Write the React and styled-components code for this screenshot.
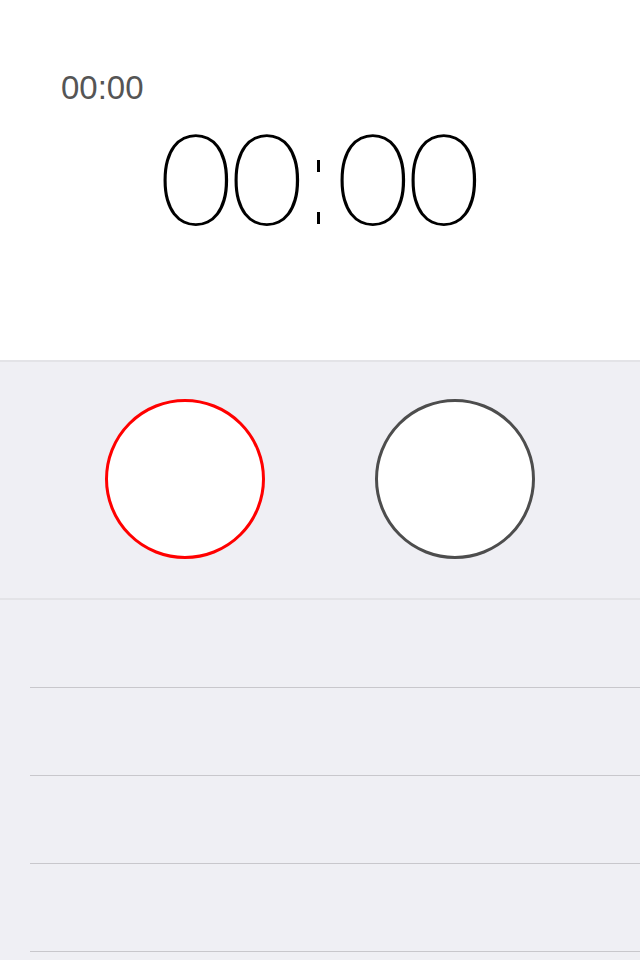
import styled, { createGlobalStyle } from 'styled-components'

const Global = createGlobalStyle`
  body {
    margin: 0;
    background: #efeff4;
    font-family: 'Liberation Sans', Arial, sans-serif;
    overflow: hidden;
  }
`

const Screen = styled.div`
  width: 640px;
  height: 960px;
  overflow: hidden;
  display: flex;
  flex-direction: column;
  background: #efeff4;
`

const Display = styled.section`
  flex: none;
  height: 362px;
  box-sizing: border-box;
  padding-top: 71px;
  background: #fff;
  border-bottom: 2px solid #e3e3e7;
`

const LapTime = styled.div`
  padding-left: 61px;
  font-size: 33px;
  line-height: 1;
  color: #555;
`

const MainTime = styled.div`
  display: flex;
  justify-content: center;
  padding-right: 3px;
  margin-top: 9px;
  font-family: Lato, 'DejaVu Sans', sans-serif;
  font-weight: 100;
  font-size: 127px;
  line-height: 1;
  color: #000;
  -webkit-text-stroke: 1.6px #000;
`

const Digit = styled.span`
  width: 71px;
  text-align: center;
`

const Colon = styled.span`
  position: relative;
  width: 35px;
  text-align: center;
  color: transparent;
  -webkit-text-stroke: 0;

  &::before,
  &::after {
    content: '';
    position: absolute;
    left: 16px;
    width: 3px;
    height: 12px;
    background: #000;
  }
  &::before { top: 47px; }
  &::after { top: 99px; }
`

const Controls = styled.section`
  flex: none;
  display: flex;
  justify-content: center;
  gap: 110px;
  padding: 37px 0 39px;
  border-bottom: 2px solid #e3e3e7;
`

const RoundButton = styled.button`
  width: 160px;
  height: 160px;
  box-sizing: border-box;
  padding: 0;
  border-radius: 50%;
  border: 3px solid ${p => p.$ring};
  background: #fff;
  cursor: pointer;
`

const Laps = styled.ul`
  margin: 0;
  padding: 0 0 0 30px;
  list-style: none;
`

const Lap = styled.li`
  height: 87px;
  border-bottom: 1px solid #c8c7cc;
`

export default function App() {
  const main = ['0', '0', ':', '0', '0']
  return (
    <Screen>
      <Global />
      <Display>
        <LapTime>00:00</LapTime>
        <MainTime>
          {main.map((c, i) =>
            c === ':' ? <Colon key={i}>:</Colon> : <Digit key={i}>{c}</Digit>
          )}
        </MainTime>
      </Display>
      <Controls>
        <RoundButton $ring="#ff0000" aria-label="Start" />
        <RoundButton $ring="#4d4d4d" aria-label="Lap" />
      </Controls>
      <Laps>
        {[0, 1, 2, 3, 4].map(i => <Lap key={i} />)}
      </Laps>
    </Screen>
  )
}
